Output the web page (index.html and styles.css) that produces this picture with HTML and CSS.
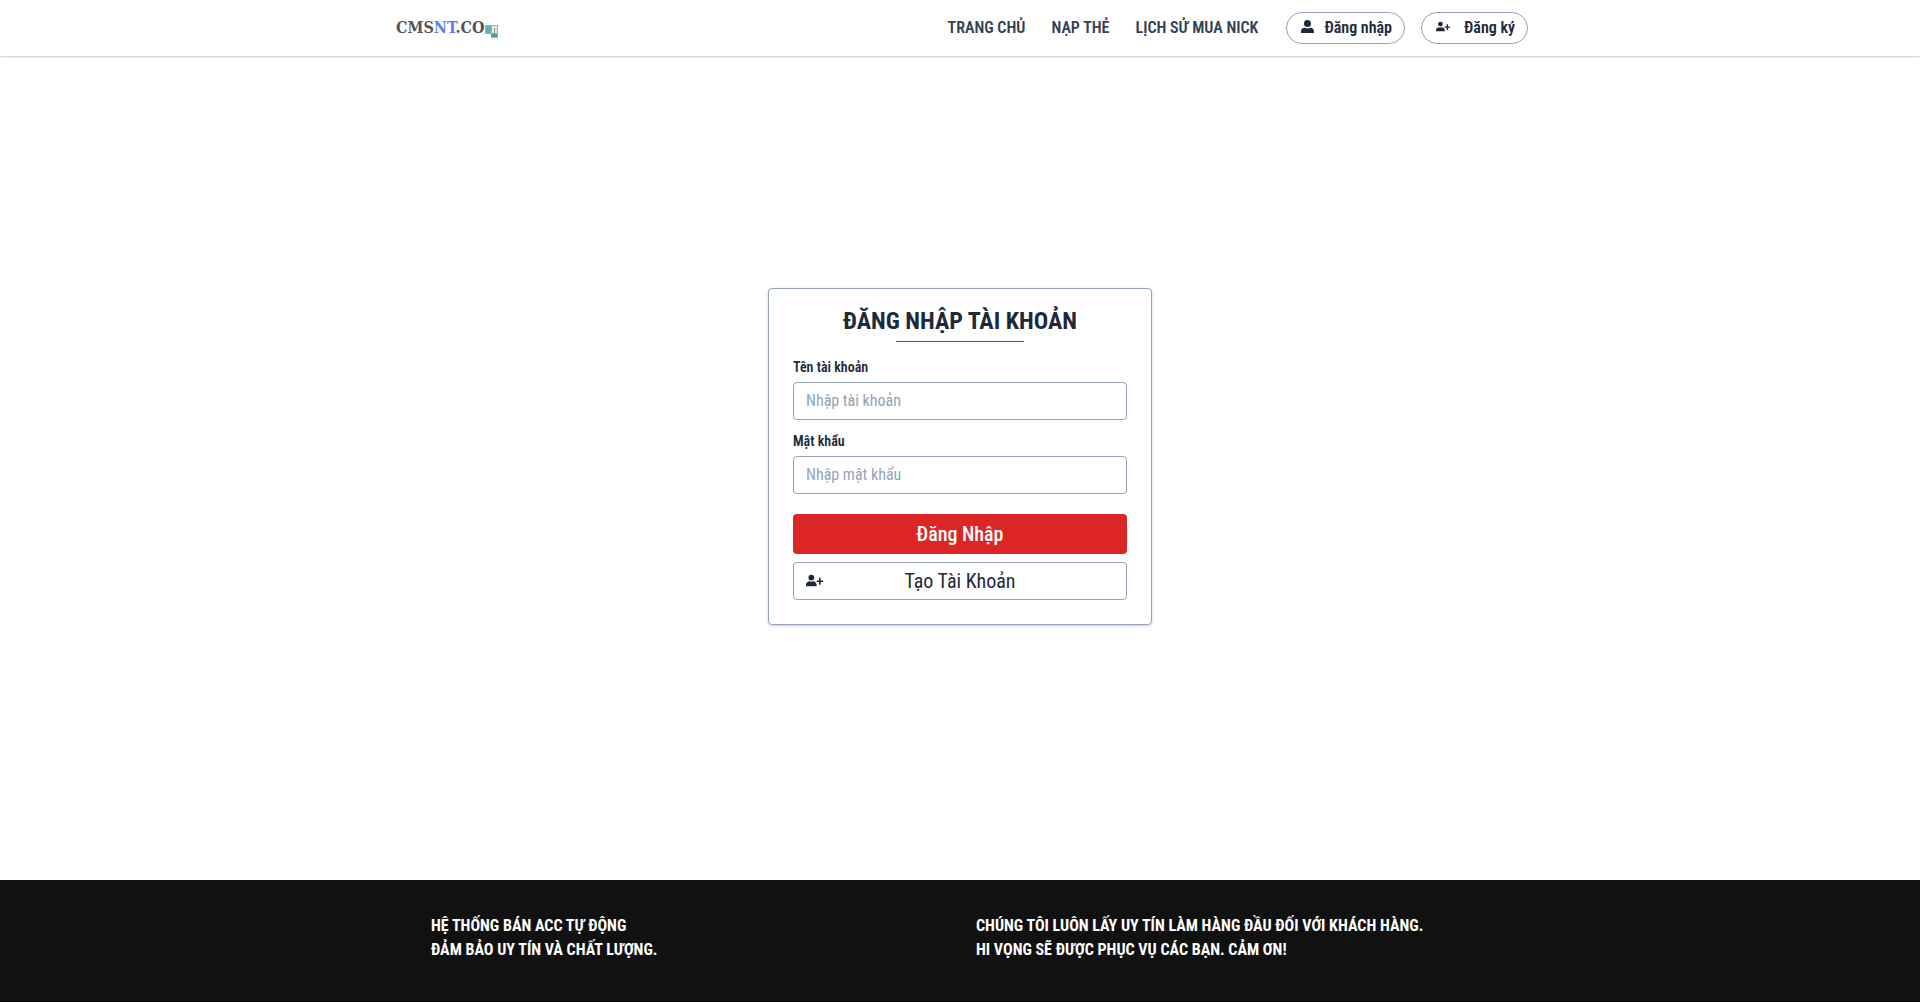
FILE: index.html
```html
<!DOCTYPE html>
<html lang="vi">
<head>
<meta charset="utf-8">
<meta name="viewport" content="width=device-width, initial-scale=1">
<title>Đăng nhập tài khoản</title>
<link rel="stylesheet" href="styles.css">
</head>
<body>
<svg class="sprite" aria-hidden="true">
  <symbol id="user" viewBox="0 0 24 24"><path d="M12 0a6.500 6.500 0 1 0 0 13 6.500 6.500 0 0 0 0-13zM7 14.500a7 7 0 0 0-7 7V24h24v-2.500a7 7 0 0 0-7-7q-5 2.500-10 0z"/></symbol>
  <symbol id="user-plus" viewBox="0 0 32 24"><path d="M10 1a5.500 5.500 0 1 0 0 11 5.500 5.500 0 0 0 0-11zM6 13.500c-4 1-6 4-6 7V23h20v-2.500c0-3-2-6-6-7q-4 1.500-8 0zM24.500 7h3v5h4.500v3h-4.500v5h-3v-5H20v-3h4.500z"/></symbol>
</svg>
<header class="topbar">
  <div class="topbar-inner">
    <a class="logo" href="#"><span>CMS<span class="logo-accent">NT</span>.CO</span><svg class="logo-mark" viewBox="0 0 13 13" aria-hidden="true"><path fill="#9ab4bb" d="M0 0h13v13H6V9H0z"/><path fill="#6aaead" d="M1 1h5v7H1z"/><path fill="#e3ebe4" d="M7 1h5v7H7z"/><path fill="#4a9aac" d="M6 9h6v3H6z"/><path fill="#8a9a80" d="M9 3h1v6H9z"/></svg></a>
    <nav class="menu">
      <a class="menu-link" href="#">TRANG CHỦ</a>
      <a class="menu-link" href="#">NẠP THẺ</a>
      <a class="menu-link" href="#">LỊCH SỬ MUA NICK</a>
    </nav>
    <div class="account">
      <a class="pill" href="#"><svg class="icon-user" aria-hidden="true"><use href="#user"/></svg>Đăng nhập</a>
      <a class="pill pill-register" href="#"><svg class="icon-plus" aria-hidden="true"><use href="#user-plus"/></svg>Đăng ký</a>
    </div>
  </div>
</header>
<main class="content">
  <form class="card">
    <h1 class="title">ĐĂNG NHẬP TÀI KHOẢN</h1>
    <label class="label" for="username">Tên tài khoản</label>
    <input class="field" id="username" type="text" placeholder="Nhập tài khoản">
    <label class="label" for="password">Mật khẩu</label>
    <input class="field" id="password" type="password" placeholder="Nhập mật khẩu">
    <button class="submit" type="submit">Đăng Nhập</button>
    <button class="create" type="button"><svg class="icon-create" aria-hidden="true"><use href="#user-plus"/></svg><span>Tạo Tài Khoản</span></button>
  </form>
</main>
<footer class="footer">
  <div class="footer-inner">
    <p>HỆ THỐNG BÁN ACC TỰ ĐỘNG<br>ĐẢM BẢO UY TÍN VÀ CHẤT LƯỢNG.</p>
    <p>CHÚNG TÔI LUÔN LẤY UY TÍN LÀM HÀNG ĐẦU ĐỐI VỚI KHÁCH HÀNG.<br>HI VỌNG SẼ ĐƯỢC PHỤC VỤ CÁC BẠN. CẢM ƠN!</p>
  </div>
</footer>
</body>
</html>
```
FILE: styles.css
```css
*, *::before, *::after { box-sizing: border-box; }

body {
  margin: 0;
  min-height: 100vh;
  display: flex;
  flex-direction: column;
  background: #fff;
  color: #1e293b;
  font: 16px/24px "Roboto Condensed", "Liberation Sans Narrow", Roboto, sans-serif;
}

a { color: inherit; text-decoration: none; }
svg { display: block; flex: none; fill: currentColor; }
input, button { font: inherit; color: inherit; }
.sprite { width: 0; height: 0; position: absolute; }

.topbar {
  height: 56px;
  box-shadow: 0 1px 2px rgba(0, 0, 0, .2);
}
.topbar-inner {
  max-width: 1152px;
  height: 100%;
  margin: 0 auto;
  padding: 0 8px 0 12px;
  display: flex;
  align-items: center;
}
.logo {
  display: flex;
  align-items: center;
  font: bold 16px/24px "DejaVu Serif Condensed", "DejaVu Serif", serif;
  color: #555;
}
.logo-accent { color: #5b7cff; }
.logo-mark { width: 13px; height: 13px; margin-top: 6px; }

.menu { display: flex; gap: 26px; margin-left: auto; }
.menu-link { font-weight: 600; color: #334155; }

.account { display: flex; gap: 16px; margin-left: 28px; }
.pill {
  height: 32px;
  padding: 0 12px 0 14px;
  display: flex;
  align-items: center;
  gap: 10px;
  border: 1px solid #94a3b8;
  border-radius: 16px;
  font-weight: 600;
}
.pill-register { gap: 14px; }
.icon-user { width: 13px; height: 13px; margin-bottom: 4px; }
.icon-plus { width: 14px; height: 11px; margin-bottom: 4px; }

.content {
  flex: 1;
  display: flex;
  align-items: center;
  justify-content: center;
  padding-bottom: 24px;
}
.card {
  width: 384px;
  padding: 16px 24px 24px;
  display: flex;
  flex-direction: column;
  border: 1px solid #94a3b8;
  border-radius: 4px;
  box-shadow: 0 1px 3px rgba(0, 0, 0, .2);
}
.title {
  margin: 0 0 12px;
  font-size: 24px;
  line-height: 32px;
  font-weight: 700;
  text-align: center;
}
.title::after {
  content: "";
  display: block;
  width: 128px;
  height: 1px;
  margin: 4px auto 0;
  background: #475569;
}
.label { margin-bottom: 2px; font-size: 14px; line-height: 26px; font-weight: 600; }
.field {
  width: 100%;
  height: 38px;
  margin: 0 0 8px;
  padding: 0 12px;
  background: #fff;
  border: 1px solid #94a3b8;
  border-radius: 4px;
}
.field::placeholder { color: #94a3b8; opacity: 1; }
.submit {
  height: 40px;
  margin: 12px 0 8px;
  border: 0;
  border-radius: 4px;
  background: #dc2626;
  color: #fff;
  font-size: 20px;
  font-weight: 500;
}
.create {
  height: 38px;
  padding: 0 12px;
  display: grid;
  grid-template-columns: 1fr auto 1fr;
  align-items: center;
  border: 1px solid #94a3b8;
  border-radius: 4px;
  background: #fff;
  font-size: 20px;
}
.icon-create { width: 17px; height: 13px; }

.footer {
  padding: 34px 0 39px;
  background: #111;
  border-bottom: 1px solid #000;
  color: #fff;
  font-weight: 700;
}
.footer-inner {
  max-width: 1090px;
  margin: 0 auto;
  padding: 0 16px;
  display: grid;
  grid-template-columns: 1fr 1fr;
  gap: 32px;
}
.footer p { margin: 0; }
```
